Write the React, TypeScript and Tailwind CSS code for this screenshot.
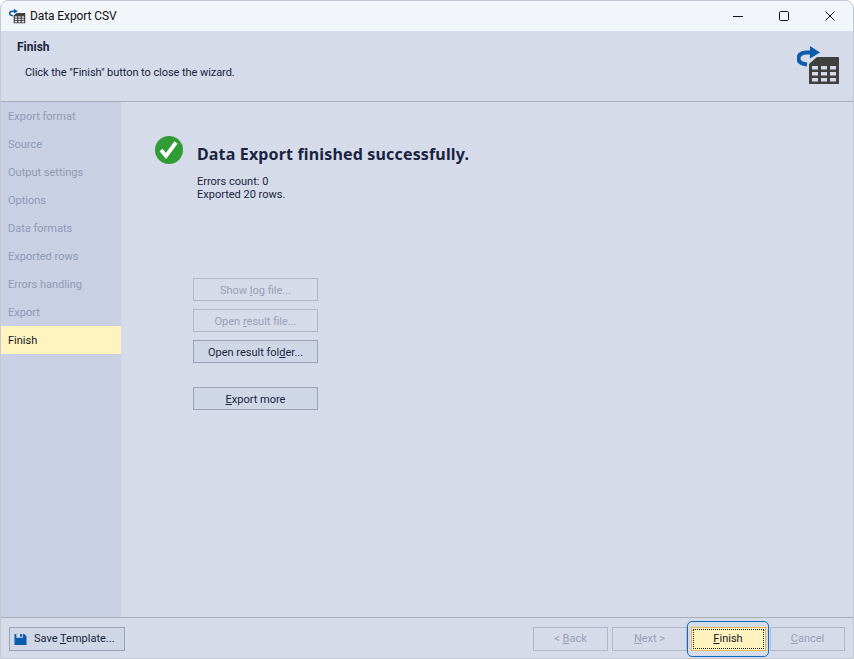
import * as React from "react";

const STEPS = ["Export format", "Source", "Output settings", "Options", "Data formats", "Exported rows", "Errors handling", "Export"];

function TableIcon({ className, cell }: { className: string; cell: string }) {
  return (
    <svg viewBox="0 0 44 40" className={className}>
      <path d="M16 7.500 H9 C3 8 1.500 11 1.500 13.500 C1.500 17 4 19 10 19.500" fill="none" stroke="#0b5cad" strokeWidth="4" />
      <path d="M13 1 L23 7.500 L13 13.500 Z" fill="#0b5cad" />
      <path d="M12 19 L20 12 H42 V39 H12 Z" fill="#404040" />
      {[21, 27, 33].map((y) =>
        [15, 24, 33].map((x) => <rect key={`${x}-${y}`} x={x} y={y} width="6" height="3.500" fill={cell} />)
      )}
    </svg>
  );
}

function PanelButton({ children, disabled, active }: { children: React.ReactNode; disabled?: boolean; active?: boolean }) {
  return (
    <div
      className={`w-[125px] h-[23px] pt-[3px] flex items-center justify-center border ${
        disabled ? "border-[#b1b8c9] text-[#99a1b5]" : "border-[#9aa2b3] text-[#1a2440]"
      } ${active ? "bg-[#cfd7e7]" : ""}`}
    >
      <span>{children}</span>
    </div>
  );
}

function FooterButton({ children }: { children: React.ReactNode }) {
  return (
    <div className="w-[75px] h-[24px] pt-[1px] flex items-center justify-center border border-[#b1b8c9] text-[#99a1b5]">
      <span>{children}</span>
    </div>
  );
}

export default function App() {
  return (
    <div className="w-[854px] h-[659px] bg-[#d5dbe9] flex flex-col overflow-hidden rounded-t-[8px] border border-[#c5c9d4] font-['Roboto',sans-serif] text-[11px] text-[#1a2440]">
      <div className="h-[30px] shrink-0 bg-[#f2f6fb] flex items-center">
        <TableIcon cell="#f2f6fb" className="w-[17px] h-[16px] ml-[8px] mr-[4px]" />
        <span className="text-[12px] tracking-[-0.1px] text-[#111]">Data Export CSV</span>
        <div className="ml-auto flex items-center h-full">
          <div className="w-[46px] flex justify-center">
            <svg viewBox="0 0 12 12" className="w-3 h-3"><path d="M1 6.500 H11" stroke="#111" strokeWidth="1" /></svg>
          </div>
          <div className="w-[46px] flex justify-center">
            <svg viewBox="0 0 12 12" className="w-3 h-3"><rect x="1.500" y="1.500" width="9" height="9" rx="1.200" fill="none" stroke="#111" strokeWidth="1" /></svg>
          </div>
          <div className="w-[46px] flex justify-center">
            <svg viewBox="0 0 12 12" className="w-3 h-3"><path d="M1.500 1.500 L10.500 10.500 M10.500 1.500 L1.500 10.500" stroke="#111" strokeWidth="1" /></svg>
          </div>
        </div>
      </div>

      <div className="h-[71px] shrink-0 border-b border-[#a9aebb] flex pl-[16px]">
        <div className="flex-1">
          <p className="mt-[8px] font-bold text-[12px] leading-[16px]">Finish</p>
          <p className="mt-[10px] ml-[8px] leading-[16px] tracking-[-0.06px]">Click the "Finish" button to close the wizard.</p>
        </div>
        <TableIcon cell="#d5dbe9" className="w-[44px] h-[40px] mt-[14px] mr-[12px]" />
      </div>

      <div className="flex-1 flex min-h-0">
        <div className="w-[120px] shrink-0 bg-[#c9d0e3]">
          {STEPS.map((step) => (
            <div key={step} className="h-[28px] pt-[2px] pl-[7px] flex items-center text-[#8f9ab5]">{step}</div>
          ))}
          <div className="h-[28px] pt-[2px] pl-[7px] flex items-center bg-[#fff3bf] text-[#111827]">Finish</div>
        </div>
        <div className="flex-1 pl-[34px] pt-[34px]">
          <div className="flex items-start h-[28px]">
            <svg viewBox="0 0 28 28" className="w-[28px] h-[28px]">
              <circle cx="14" cy="14" r="14" fill="#319b36" />
              <path d="M6 14 L11 20 L21 6.500" fill="none" stroke="#fff" strokeWidth="3.800" />
            </svg>
            <h1 className="ml-[14px] mt-[7px] text-[16px] leading-[22px] font-bold font-['Noto_Sans',sans-serif] tracking-[0.16px] text-[#1a2440]">Data Export finished successfully.</h1>
          </div>
          <div className="ml-[42px] mt-[11px] leading-[13px]">
            <p>Errors count: 0</p>
            <p>Exported 20 rows.</p>
          </div>
          <div className="ml-[38px] mt-[77px] flex flex-col gap-2">
            <PanelButton disabled>Show <u>l</u>og file...</PanelButton>
            <PanelButton disabled>Open <u>r</u>esult file...</PanelButton>
            <PanelButton active>Open result fol<u>d</u>er...</PanelButton>
            <div className="mt-4">
              <PanelButton active><u>E</u>xport more</PanelButton>
            </div>
          </div>
        </div>
      </div>

      <div className="h-[41px] shrink-0 border-t border-[#a9aebb] flex items-center pl-[8px] pr-[8px] pt-[1px]">
        <div className="w-[116px] h-[24px] pt-[1px] border border-[#9aa2b3] bg-[#cfd7e7] flex items-center pl-[4px]">
          <svg viewBox="0 0 14 14" className="w-[13px] h-[13px] mr-[7px]">
            <path d="M0.500 1 H2.500 V5 H9.500 V1 H11 L13.500 3.500 V13 H0.500 Z M6.500 1 H8.500 V4 H6.500 Z" fill="#0b5cad" />
          </svg>
          <span>Save <u>T</u>emplate...</span>
        </div>
        <div className="ml-auto flex items-center gap-1">
          <FooterButton>&lt; <u>B</u>ack</FooterButton>
          <FooterButton><u>N</u>ext &gt;</FooterButton>
          <div className="w-[82px] h-[36px] -ml-[4px] -mr-[3px] rounded-[5px] border border-[#0f6cc4] flex items-center justify-center">
            <div className="w-[75px] h-[24px] bg-[#fff3bf] border border-[#e3b75e] flex items-center justify-center p-[1px]">
              <div className="w-full h-full pt-[1px] border border-dotted border-[#222] flex items-center justify-center text-[#111827]">
                <span><u>F</u>inish</span>
              </div>
            </div>
          </div>
          <FooterButton><u>C</u>ancel</FooterButton>
        </div>
      </div>
    </div>
  );
}
